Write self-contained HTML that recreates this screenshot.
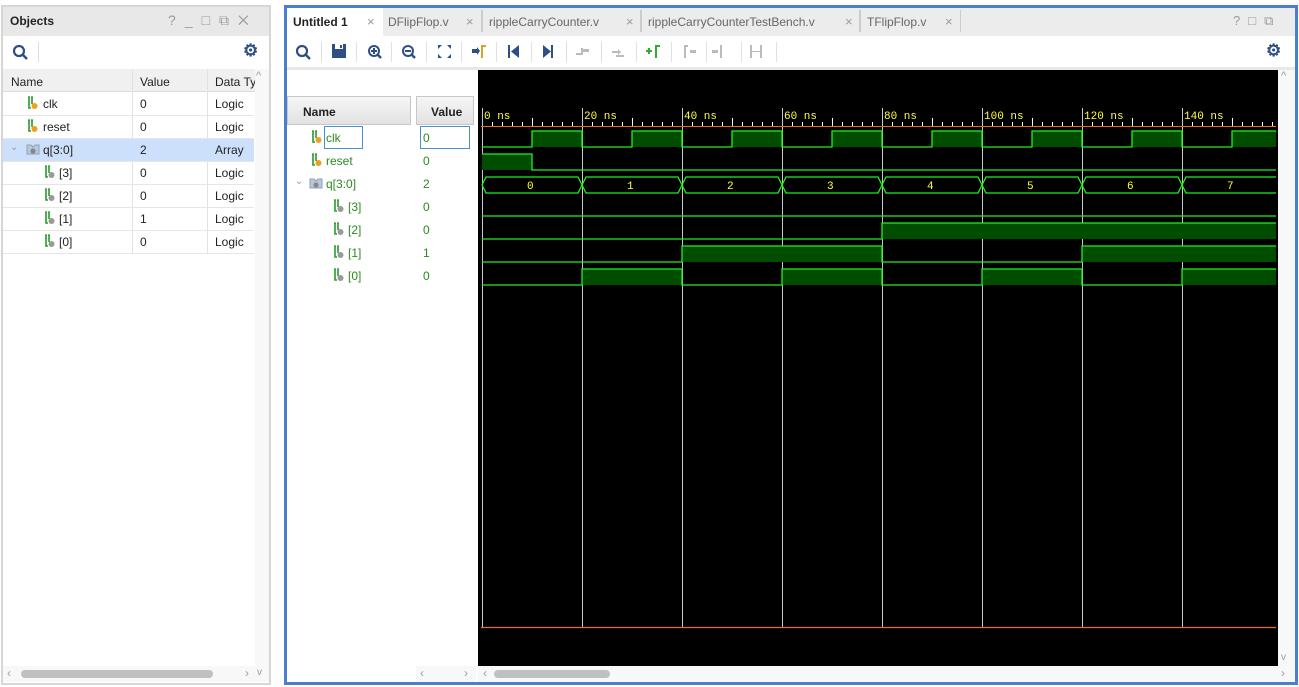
<!DOCTYPE html>
<html><head><meta charset="utf-8"><style>
*{box-sizing:border-box;margin:0;padding:0}
body{width:1299px;height:687px;background:#fff;font-family:"Liberation Sans",sans-serif;font-size:12px;color:#222;position:relative;overflow:hidden}
.a{position:absolute}
.ico{color:#2d4f86;font-weight:bold}
.g{color:#9a9a9a}
.nm{position:absolute;font-size:12px;color:#2b8a1e}
</style></head><body>
<svg width="0" height="0" style="position:absolute"><defs>
<g id="so"><path d="M2 1v11h2M5 1v7" stroke="#2a9a2a" stroke-width="1.6" fill="none"/><path d="M1 1h2M4 1h2" stroke="#2a9a2a" stroke-width="1.2"/><circle cx="7.5" cy="10" r="3" fill="#f0a020"/></g>
<g id="sg"><path d="M2 1v11h2M5 1v7" stroke="#2a9a2a" stroke-width="1.6" fill="none"/><path d="M1 1h2M4 1h2" stroke="#2a9a2a" stroke-width="1.2"/><circle cx="7.5" cy="10" r="3" fill="#999"/></g>
<g id="bus"><path d="M1 2h4l2 2 2-2h4v9h-12z" fill="#b8c8d8" stroke="#8aa0b8"/><circle cx="7" cy="8" r="2.6" fill="#888"/></g>
</defs></svg>
<!-- left panel -->
<div class="a" style="left:1px;top:5px;width:270px;height:680px;border:2px solid #d6d6d6;background:#fff"></div>
<div class="a" style="left:3px;top:7px;width:266px;height:29px;background:#e8e8e8"></div>
<div class="a" style="left:10px;top:14px;font-weight:bold;font-size:12px">Objects</div>
<div class="a g" style="left:168px;top:12px;font-size:14px;letter-spacing:9px">?_□⧉✕</div>
<svg class="a" style="left:12px;top:44px" width="18" height="18"><circle cx="7" cy="7" r="5" fill="none" stroke="#2d4f86" stroke-width="2.2"/><line x1="11" y1="11" x2="15" y2="15" stroke="#2d4f86" stroke-width="2.5"/></svg>
<div class="a" style="left:38px;top:42px;width:1px;height:20px;background:#ddd"></div>
<div class="a ico" style="left:243px;top:41px;font-size:17px">⚙</div>
<div class="a" style="left:3px;top:69px;width:252px;height:23px;background:#f0f0f0;border-bottom:1px solid #ddd"></div>
<div class="a" style="left:11px;top:75px">Name</div>
<div class="a" style="left:140px;top:75px">Value</div>
<div class="a" style="left:215px;top:75px">Data Ty</div>
<div class="a" style="left:132px;top:69px;width:1px;height:184px;background:#e2e2e2"></div>
<div class="a" style="left:207px;top:69px;width:1px;height:184px;background:#e2e2e2"></div>
<div class="a" style="left:3px;top:138px;width:251px;height:23px;background:#cce0fb"></div>
<div class="a" style="left:255px;top:69px;width:14px;height:598px;background:#f8f8f8"></div>
<div class="a g" style="left:256px;top:70px;font-size:11px">^</div>
<div class="a" style="left:3px;top:666px;width:266px;height:16px;background:#f8f8f8"></div>
<div class="a" style="left:21px;top:670px;width:192px;height:8px;border-radius:4px;background:#c0c0c0"></div>
<div class="a g" style="left:7px;top:666px">‹</div><div class="a g" style="left:245px;top:666px">›</div><div class="a g" style="left:257px;top:667px;font-size:10px">v</div>
<div class="a" style="left:3px;top:115px;width:251px;height:1px;background:#e6e6e6"></div>
<div class="a" style="left:3px;top:138px;width:251px;height:1px;background:#e6e6e6"></div>
<div class="a" style="left:3px;top:161px;width:251px;height:1px;background:#e6e6e6"></div>
<div class="a" style="left:3px;top:184px;width:251px;height:1px;background:#e6e6e6"></div>
<div class="a" style="left:3px;top:207px;width:251px;height:1px;background:#e6e6e6"></div>
<div class="a" style="left:3px;top:230px;width:251px;height:1px;background:#e6e6e6"></div>
<div class="a" style="left:3px;top:253px;width:251px;height:1px;background:#e6e6e6"></div>
<svg class="a" style="left:27px;top:96px" width="12" height="14"><use href="#so"/></svg><div class="a" style="left:43px;top:97px">clk</div><div class="a" style="left:140px;top:97px">0</div><div class="a" style="left:215px;top:97px">Logic</div>
<svg class="a" style="left:27px;top:119px" width="12" height="14"><use href="#so"/></svg><div class="a" style="left:43px;top:120px">reset</div><div class="a" style="left:140px;top:120px">0</div><div class="a" style="left:215px;top:120px">Logic</div>
<div class="a g" style="left:10px;top:142px;font-size:10px">⌄</div><svg class="a" style="left:26px;top:143px" width="15" height="13"><use href="#bus"/></svg><div class="a" style="left:43px;top:143px">q[3:0]</div><div class="a" style="left:140px;top:143px">2</div><div class="a" style="left:215px;top:143px">Array</div>
<svg class="a" style="left:44px;top:165px" width="12" height="14"><use href="#sg"/></svg><div class="a" style="left:59px;top:166px">[3]</div><div class="a" style="left:140px;top:166px">0</div><div class="a" style="left:215px;top:166px">Logic</div>
<svg class="a" style="left:44px;top:188px" width="12" height="14"><use href="#sg"/></svg><div class="a" style="left:59px;top:189px">[2]</div><div class="a" style="left:140px;top:189px">0</div><div class="a" style="left:215px;top:189px">Logic</div>
<svg class="a" style="left:44px;top:211px" width="12" height="14"><use href="#sg"/></svg><div class="a" style="left:59px;top:212px">[1]</div><div class="a" style="left:140px;top:212px">1</div><div class="a" style="left:215px;top:212px">Logic</div>
<svg class="a" style="left:44px;top:234px" width="12" height="14"><use href="#sg"/></svg><div class="a" style="left:59px;top:235px">[0]</div><div class="a" style="left:140px;top:235px">0</div><div class="a" style="left:215px;top:235px">Logic</div>

<!-- right panel -->
<div class="a" style="left:284px;top:5px;width:1014px;height:680px;border:3px solid #4a7fce;background:#fff"></div>
<div class="a" style="left:287px;top:8px;width:1008px;height:28px;background:#ececec"></div>
<div class="a" style="left:287px;top:8px;width:96px;height:28px;background:#fff"></div>
<div class="a" style="left:293px;top:15px;font-weight:bold">Untitled 1</div><div class="a g" style="left:367px;top:14px;font-size:13px">×</div>
<div class="a" style="left:388px;top:15px;color:#666">DFlipFlop.v</div><div class="a g" style="left:466px;top:14px;font-size:13px">×</div><div class="a" style="left:481px;top:10px;width:2px;height:22px;background:#ccc"></div>
<div class="a" style="left:489px;top:15px;color:#666">rippleCarryCounter.v</div><div class="a g" style="left:626px;top:14px;font-size:13px">×</div><div class="a" style="left:640px;top:10px;width:2px;height:22px;background:#ccc"></div>
<div class="a" style="left:648px;top:15px;color:#666">rippleCarryCounterTestBench.v</div><div class="a g" style="left:845px;top:14px;font-size:13px">×</div><div class="a" style="left:859px;top:10px;width:2px;height:22px;background:#ccc"></div>
<div class="a" style="left:867px;top:15px;color:#666">TFlipFlop.v</div><div class="a g" style="left:945px;top:14px;font-size:13px">×</div><div class="a" style="left:960px;top:10px;width:1px;height:22px;background:#ccc"></div>
<div class="a g" style="left:1233px;top:13px;font-size:13px;letter-spacing:8px">?□⧉</div>
<svg class="a" style="left:295px;top:44px" width="18" height="18"><circle cx="7" cy="7" r="5" fill="none" stroke="#2d4f86" stroke-width="2.2"/><line x1="11" y1="11" x2="15" y2="15" stroke="#2d4f86" stroke-width="2.5"/></svg>
<svg class="a" style="left:280px;top:36px" width="520" height="32">
<g fill="#2d4f86">
<rect x="52" y="8" width="14" height="14"/><rect x="55" y="8" width="8" height="5" fill="#fff"/><rect x="60" y="9" width="2" height="3"/>
<circle cx="94" cy="15" r="5" fill="none" stroke="#2d4f86" stroke-width="2"/><line x1="98" y1="19" x2="101" y2="22" stroke="#2d4f86" stroke-width="2.5"/><rect x="91" y="14" width="6" height="2"/><rect x="93" y="12" width="2" height="6"/>
<circle cx="128" cy="15" r="5" fill="none" stroke="#2d4f86" stroke-width="2"/><line x1="132" y1="19" x2="135" y2="22" stroke="#2d4f86" stroke-width="2.5"/><rect x="125" y="14" width="6" height="2"/>
<path d="M158 9h4l-4 4zM171 9h-4l4 4zM158 22h4l-4-4zM171 22h-4l4-4z"/>
<path d="M192 13h5v-2l3 4-3 4v-2h-5z"/><rect x="201" y="9" width="2" height="13" fill="#e0a020"/><rect x="201" y="9" width="5" height="2" fill="#e0a020"/>
<rect x="228" y="9" width="2" height="13"/><path d="M239 9v13l-8-6.5z"/>
<path d="M263 9v13l8-6.5z"/><rect x="271" y="9" width="2" height="13"/>
<g fill="#bbb"><path d="M296 17h5v-5h2v7h-7z"/><path d="M303 13h6v3h-6z"/><path d="M332 15h6v-2l3 3-3 3v-2h-6z"/><path d="M336 19h8v2h-8z"/><rect x="404" y="9" width="2" height="13"/><rect x="404" y="9" width="4" height="2"/><rect x="440" y="9" width="2" height="13"/><path d="M410 14h6v3h-6z"/><path d="M432 14h6v3h-6z"/><rect x="470" y="9" width="2" height="13"/><rect x="480" y="9" width="2" height="13"/><rect x="472" y="15" width="8" height="1"/></g>
<path d="M366 14h6v2h-6zM368 12h2v6h-2z" fill="#3a3"/><rect x="375" y="9" width="2" height="13" fill="#3a3"/><rect x="375" y="9" width="5" height="2" fill="#3a3"/>
</g>
<g fill="#e0e0e0"><rect x="41" y="6" width="1" height="20"/><rect x="76" y="6" width="1" height="20"/><rect x="111" y="6" width="1" height="20"/><rect x="146" y="6" width="1" height="20"/><rect x="181" y="6" width="1" height="20"/><rect x="216" y="6" width="1" height="20"/><rect x="251" y="6" width="1" height="20"/><rect x="286" y="6" width="1" height="20"/><rect x="321" y="6" width="1" height="20"/><rect x="356" y="6" width="1" height="20"/><rect x="391" y="6" width="1" height="20"/><rect x="426" y="6" width="1" height="20"/><rect x="461" y="6" width="1" height="20"/><rect x="496" y="6" width="1" height="20"/></g>
</svg>
<div class="a ico" style="left:1266px;top:41px;font-size:17px">⚙</div>
<div class="a" style="left:287px;top:67px;width:1008px;height:3px;background:#e8e8e8"></div>

<div class="a" style="left:287px;top:96px;width:124px;height:29px;border:1px solid #c8c8c8;background:linear-gradient(#f6f6f6,#e2e2e2);font-weight:bold;padding:8px 0 0 15px">Name</div>
<div class="a" style="left:416px;top:96px;width:58px;height:29px;border:1px solid #c8c8c8;background:linear-gradient(#f6f6f6,#e2e2e2);font-weight:bold;padding:8px 0 0 14px">Value</div>
<div class="a" style="left:324px;top:126px;width:39px;height:23px;border:1px solid #4a90d0"></div>
<div class="a" style="left:420px;top:126px;width:50px;height:23px;border:1px solid #4a90d0"></div>
<svg class="a" style="left:311px;top:130px" width="12" height="14"><use href="#so"/></svg><div class="nm" style="left:326px;top:131px">clk</div><div class="nm" style="left:423px;top:131px">0</div>
<svg class="a" style="left:311px;top:153px" width="12" height="14"><use href="#so"/></svg><div class="nm" style="left:326px;top:154px">reset</div><div class="nm" style="left:423px;top:154px">0</div>
<div class="a g" style="left:295px;top:176px;font-size:10px">⌄</div><svg class="a" style="left:309px;top:177px" width="15" height="13"><use href="#bus"/></svg><div class="nm" style="left:326px;top:177px">q[3:0]</div><div class="nm" style="left:423px;top:177px">2</div>
<svg class="a" style="left:333px;top:199px" width="12" height="14"><use href="#sg"/></svg><div class="nm" style="left:348px;top:200px">[3]</div><div class="nm" style="left:423px;top:200px">0</div>
<svg class="a" style="left:333px;top:222px" width="12" height="14"><use href="#sg"/></svg><div class="nm" style="left:348px;top:223px">[2]</div><div class="nm" style="left:423px;top:223px">0</div>
<svg class="a" style="left:333px;top:245px" width="12" height="14"><use href="#sg"/></svg><div class="nm" style="left:348px;top:246px">[1]</div><div class="nm" style="left:423px;top:246px">1</div>
<svg class="a" style="left:333px;top:268px" width="12" height="14"><use href="#sg"/></svg><div class="nm" style="left:348px;top:269px">[0]</div><div class="nm" style="left:423px;top:269px">0</div>

<div class="a" style="left:416px;top:666px;width:60px;height:16px;background:#f8f8f8"></div>
<div class="a g" style="left:420px;top:666px">‹</div><div class="a g" style="left:464px;top:666px">›</div>
<div class="a" style="left:478px;top:666px;width:817px;height:16px;background:#f8f8f8"></div>
<div class="a g" style="left:483px;top:666px">‹</div><div class="a g" style="left:1281px;top:666px">›</div>
<div class="a" style="left:494px;top:670px;width:116px;height:8px;border-radius:4px;background:#c0c0c0"></div>
<div class="a" style="left:1278px;top:70px;width:17px;height:596px;background:#f8f8f8"></div>
<div class="a g" style="left:1281px;top:70px;font-size:11px">^</div><div class="a g" style="left:1281px;top:652px;font-size:10px">v</div>

<svg class="a" style="left:478px;top:70px" width="800" height="596" viewBox="478 70 800 596">
<rect x="478" y="70" width="800" height="596" fill="#000"/>
<g stroke="#c8c8c8" stroke-width="1">
<line x1="482.5" y1="108" x2="482.5" y2="627"/><line x1="582.5" y1="108" x2="582.5" y2="627"/><line x1="682.5" y1="108" x2="682.5" y2="627"/><line x1="782.5" y1="108" x2="782.5" y2="627"/><line x1="882.5" y1="108" x2="882.5" y2="627"/><line x1="982.5" y1="108" x2="982.5" y2="627"/><line x1="1082.5" y1="108" x2="1082.5" y2="627"/><line x1="1182.5" y1="108" x2="1182.5" y2="627"/>
</g>
<g id="ticks" stroke="#fff"></g>
<line x1="481" y1="126.5" x2="1276" y2="126.5" stroke="#e8701c"/>
<line x1="481" y1="627.5" x2="1276" y2="627.5" stroke="#e8701c" stroke-width="1.2"/>
<g fill="#ffff40" font-family="Liberation Mono,monospace" font-size="11">
<text x="484" y="119">0 ns</text><text x="584" y="119">20 ns</text><text x="684" y="119">40 ns</text><text x="784" y="119">60 ns</text><text x="884" y="119">80 ns</text><text x="984" y="119">100 ns</text><text x="1084" y="119">120 ns</text><text x="1184" y="119">140 ns</text>
<text x="527" y="189">0</text><text x="627" y="189">1</text><text x="727" y="189">2</text><text x="827" y="189">3</text><text x="927" y="189">4</text><text x="1027" y="189">5</text><text x="1127" y="189">6</text><text x="1227" y="189">7</text>
</g>
<g id="w" fill="#004d00" stroke="#22ee22" stroke-width="1.3"></g>
</svg>
<script>
var w=document.getElementById('w'),t=document.getElementById('ticks'),ns='http://www.w3.org/2000/svg';
function el(n,a){var e=document.createElementNS(ns,n);for(var k in a)e.setAttribute(k,a[k]);return e}
for(var x=492;x<1276;x+=10){if((x-482)%100==0)continue;var maj=(x-482)%50==0;t.appendChild(el('line',{x1:x+.5,x2:x+.5,y1:maj?118:122,y2:126}))}
function sig(top,bot,hi){var p='',prev=null;for(var i=0;i<hi.length;i++){var s=hi[i],x0=482+i*50,x1=Math.min(1276,x0+50);if(s)w.appendChild(el('rect',{x:x0,y:top,width:x1-x0,height:bot-top,stroke:'none'}));var y=s?top:bot;if(prev===null)p+='M'+x0+' '+y;else if(prev!==s)p+='L'+x0+' '+(prev?top:bot)+'L'+x0+' '+y;p+='L'+x1+' '+y;prev=s}w.appendChild(el('path',{d:p,fill:'none'}))}
var clk=[],rs=[],b3=[],b2=[],b1=[],b0=[];
for(var i=0;i<16;i++){var v=Math.floor(i/2);clk.push(i%2);rs.push(i==0?1:0);b3.push(0);b2.push((v>>2)&1);b1.push((v>>1)&1);b0.push(v&1)}
sig(131,147,clk);sig(154,170,rs);sig(200,216,b3);sig(223,239,b2);sig(246,262,b1);sig(269,285,b0);
var p='';for(var k=0;k<8;k++){var a=482+k*100,b=Math.min(1276,a+100);var e=k<7?b-4:b;p+='M'+a+' 185L'+(a+4)+' 177L'+e+' 177'+(k<7?'L'+b+' 185':'')+'M'+a+' 185L'+(a+4)+' 193L'+e+' 193'+(k<7?'L'+b+' 185':'')}
w.appendChild(el('path',{d:p,fill:'none'}));
</script>
</body></html>
